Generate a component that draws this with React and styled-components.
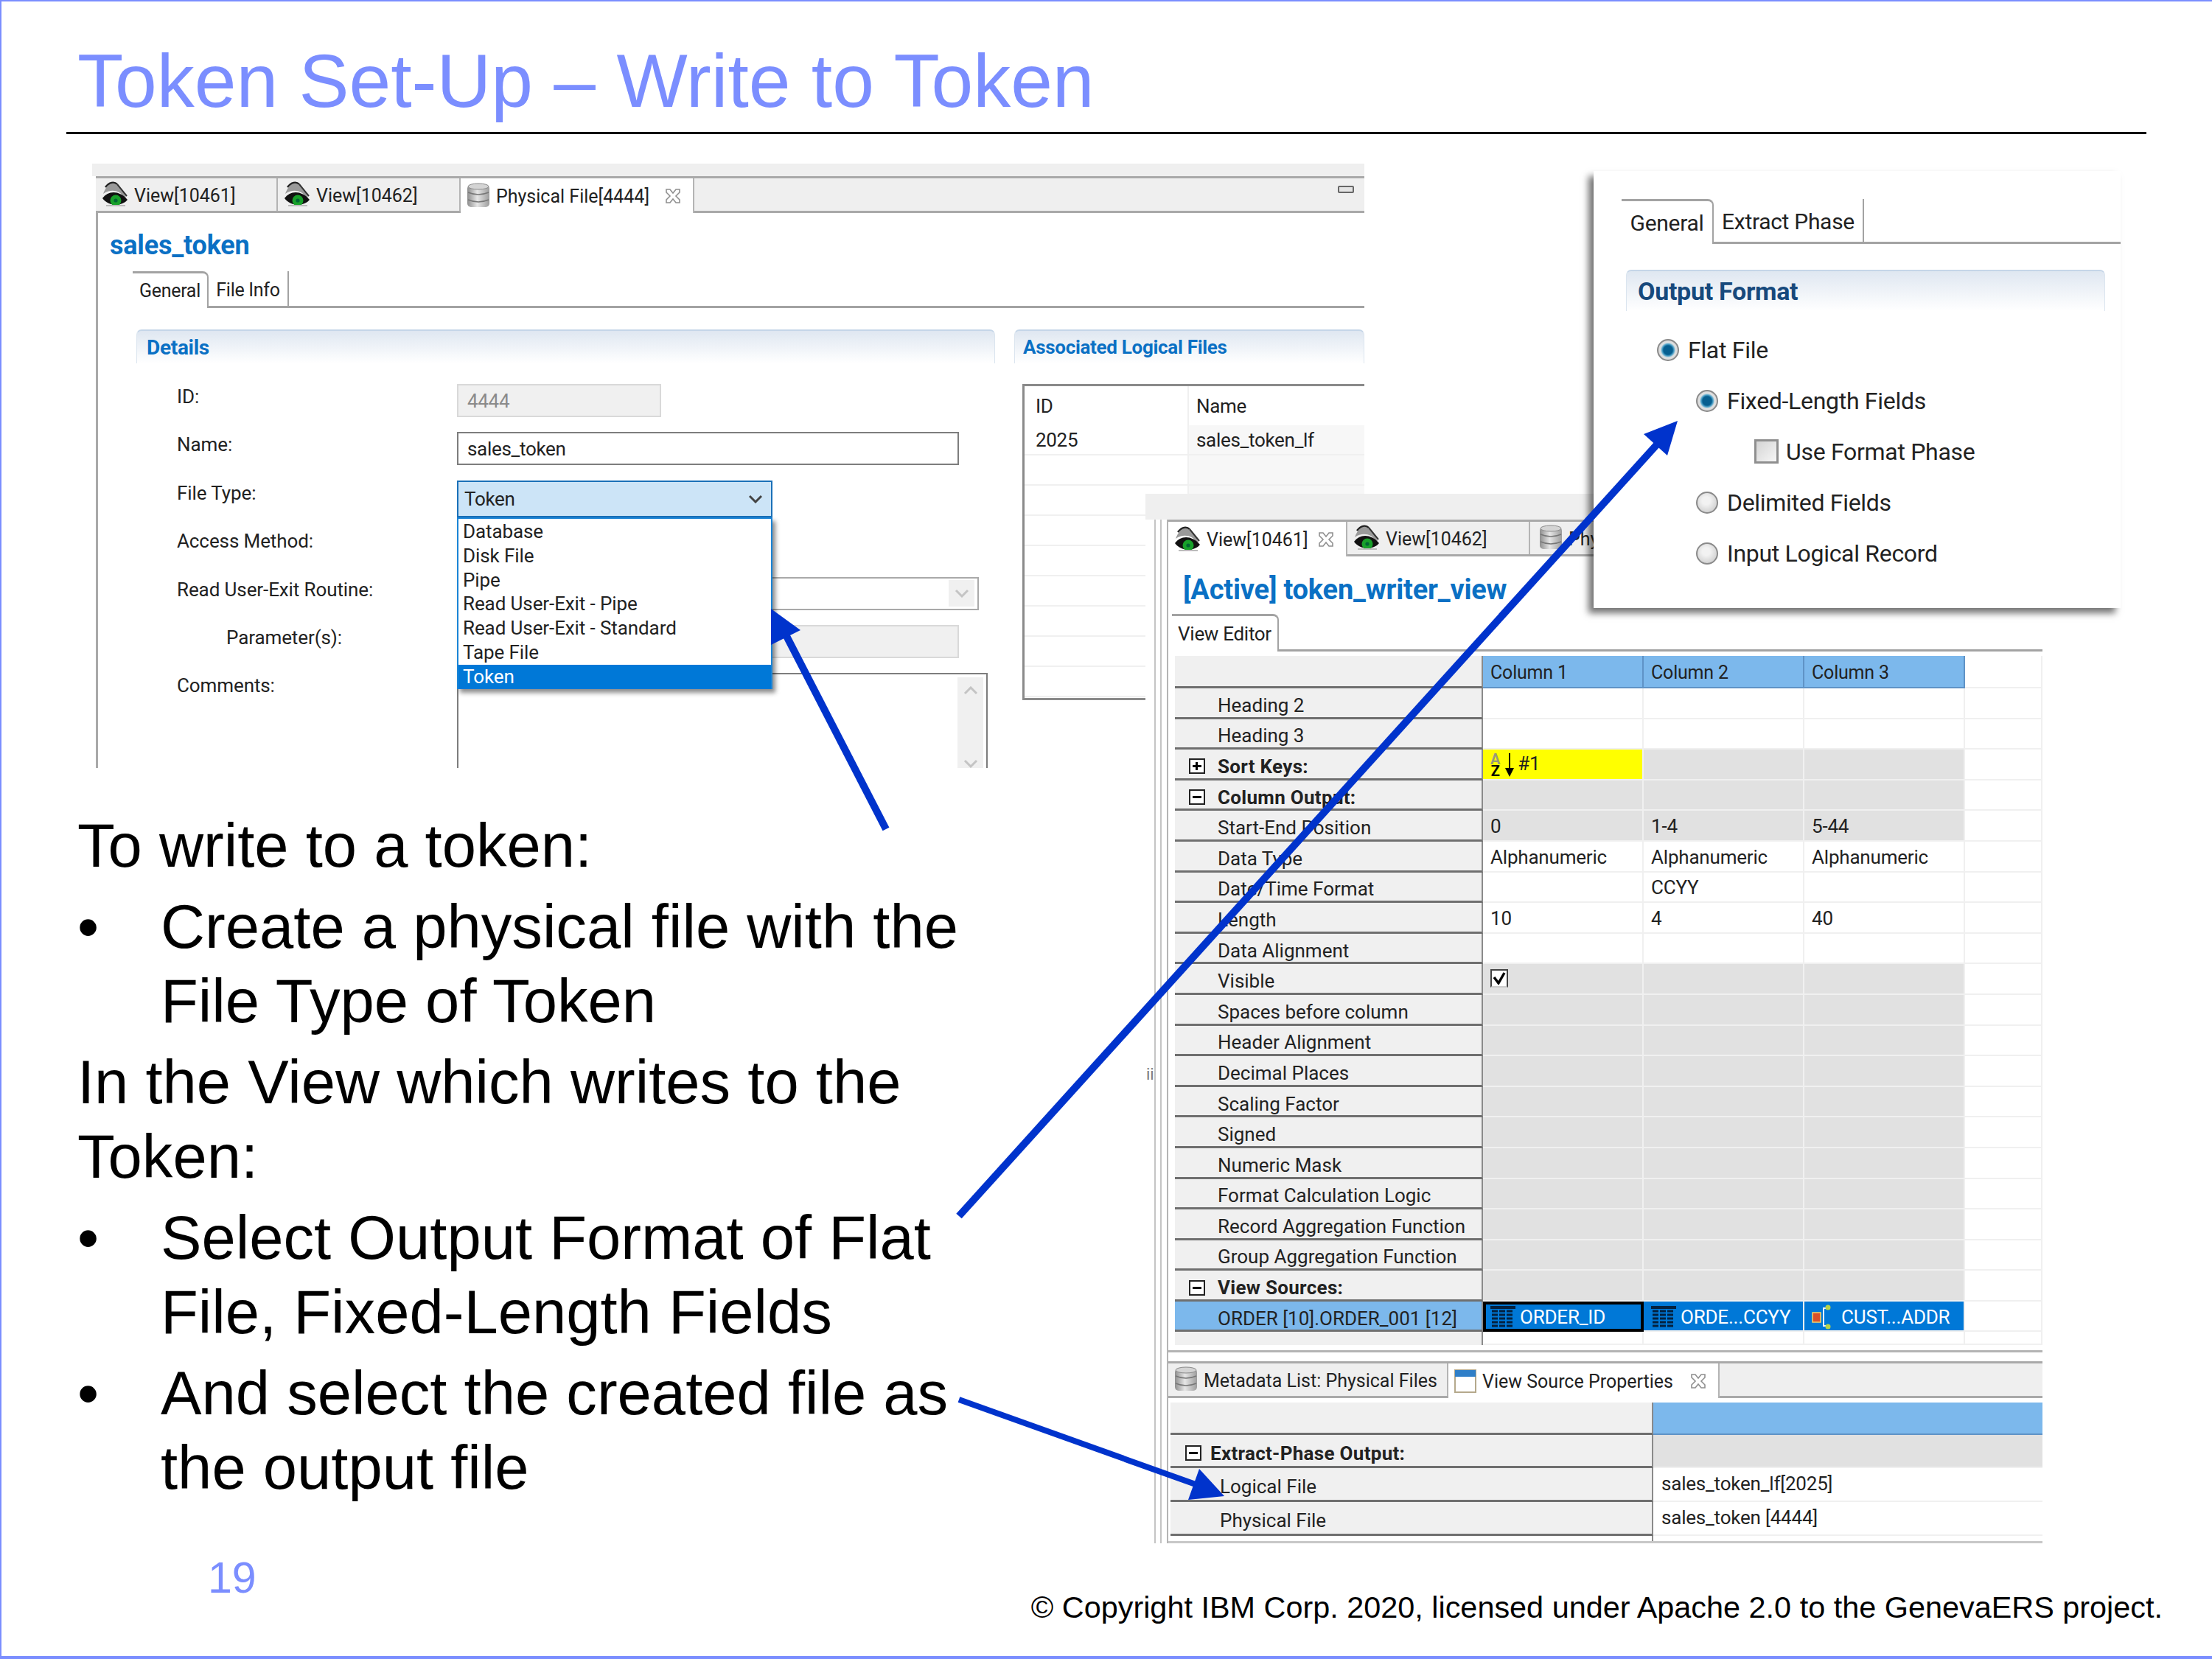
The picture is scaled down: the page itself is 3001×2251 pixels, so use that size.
import React from "react";
import styled, { createGlobalStyle } from "styled-components";

const GlobalStyle = createGlobalStyle`
  html, body { margin: 0; padding: 0; background: #fff; }
  * { box-sizing: border-box; }
`;

const SLIDE = "#7b8eff";
const ARROW = "#0033cc";
const UI = `Roboto, "Open Sans", sans-serif`;
const LINK = "#0a70c4";

const Slide = styled.div`
  position: relative;
  width: 3001px;
  height: 2251px;
  overflow: hidden;
  display: flex;
  flex-direction: column;
  background: #fff;
  border-top: 2px solid ${SLIDE};
  border-left: 2px solid ${SLIDE};
  border-bottom: 4px solid ${SLIDE};
  font-family: "Liberation Sans", Arial, sans-serif;
`;

const Title = styled.h1`
  margin: 48px 0 0 103px;
  font-size: 102px;
  line-height: 120px;
  font-weight: 400;
  color: ${SLIDE};
  white-space: nowrap;
`;

const Rule = styled.div`
  height: 3px;
  margin: 9px 0 0 88px;
  width: 2822px;
  background: #000;
`;

const Body = styled.div`
  width: 1215px;
  margin: 915px 0 0 103px;
  color: #000;
  font-size: 83.2px;
  line-height: 101px;
`;

const Para = styled.div`
  margin-bottom: 9px;
`;

const Bullet = styled.div`
  display: grid;
  grid-template-columns: 113px 1fr;
  margin-bottom: 9px;
`;

const Footer = styled.div`
  margin-top: auto;
  display: flex;
  justify-content: space-between;
  padding: 0 67px 41px 280px;
`;

const PageNo = styled.div`
  font-size: 59px;
  line-height: 70px;
  color: ${SLIDE};
  margin-bottom: 30px;
`;

const Copyright = styled.div`
  font-size: 41.4px;
  line-height: 50px;
  color: #000;
  align-self: flex-end;
`;

/* screenshot windows float on the slide; coordinates are slide pixels */
const Shot = styled.div`
  position: absolute;
  left: ${(p) => p.$x - 2}px;
  top: ${(p) => p.$y - 2}px;
  width: ${(p) => p.$w}px;
  height: ${(p) => p.$h}px;
  background: #fff;
  font-family: ${UI};
  color: #222;
  display: flex;
  flex-direction: column;
`;

const FileShot = styled(Shot)`
  font-size: 26px;
  overflow: hidden;
`;

const ViewShot = styled(Shot)`
  font-size: 26px;
  overflow: hidden;
`;

const FormatShot = styled(Shot)`
  font-size: 30px;
  box-shadow: -7px 7px 9px rgba(0, 0, 0, 0.55);
  padding: 38px 0 0 38px;
`;

const GreyTop = styled.div`
  height: ${(p) => p.$h}px;
  flex: none;
  background: #efefef;
`;

const TabStrip = styled.div`
  height: 50px;
  flex: none;
  display: flex;
  align-items: stretch;
  background: #efefef;
  border-top: 3px solid #a9a9a9;
  border-bottom: 3px solid #a9a9a9;
  position: relative;
`;

const Tab = styled.div`
  width: ${(p) => p.$w}px;
  flex: none;
  display: flex;
  align-items: center;
  gap: 8px;
  padding: 2px 0 0 ${(p) => p.$pad ?? 8}px;
  white-space: nowrap;
  font-size: 25px;
  letter-spacing: 0;
  border-right: 2px solid #b4b4b4;
  background: ${(p) => (p.$active ? "#fff" : "transparent")};
  margin-bottom: ${(p) => (p.$active ? "-3px" : "0")};
  svg {
    flex: none;
    margin-top: -2px;
  }
`;

const CloseMark = styled.span`
  margin-left: auto;
  margin-right: 15px;
  display: flex;
`;

const Minimize = styled.div`
  position: absolute;
  right: 14px;
  top: 10px;
  width: 22px;
  height: 10px;
  background: #e4e4e4;
  border: 2px solid #666;
  border-radius: 2px;
`;

const FileBody = styled.div`
  margin-left: 5px;
  flex: 1;
  display: flex;
  flex-direction: column;
  border-left: 3px solid #a9a9a9;
  position: relative;
`;

const EditorName = styled.div`
  height: ${(p) => p.$h}px;
  flex: none;
  padding: ${(p) => p.$top}px 0 0 ${(p) => p.$left}px;
  font-size: ${(p) => p.$size}px;
  line-height: 46px;
  font-weight: 700;
  color: ${LINK};
  white-space: nowrap;
  letter-spacing: -0.2px;
`;

const SubTabs = styled.div`
  height: ${(p) => p.$h ?? 50}px;
  flex: none;
  display: flex;
  margin-left: ${(p) => p.$left ?? 0}px;
  border-bottom: 3px solid #a3a3a3;
  letter-spacing: -0.3px;
  font-size: ${(p) => p.$size ?? 25}px;
`;

const SubTab = styled.div`
  width: ${(p) => p.$w}px;
  display: flex;
  align-items: center;
  justify-content: center;
  white-space: nowrap;
  margin-bottom: ${(p) => (p.$active ? "-3px" : "0")};
  padding-top: ${(p) => (p.$active ? "0" : "3px")};
  background: #fff;
  border-right: 2px solid #a3a3a3;
  border-top: ${(p) => (p.$active ? "3px solid #a3a3a3" : "0")};
  border-top-right-radius: ${(p) => (p.$active ? "8px" : "0")};
`;

const Sections = styled.div`
  flex: 1;
  display: flex;
  gap: 26px;
  padding: 29px 0 0 52px;
  min-height: 0;
`;

const Section = styled.div`
  display: flex;
  flex-direction: column;
  flex: ${(p) => (p.$w ? "none" : 1)};
  width: ${(p) => (p.$w ? `${p.$w}px` : "auto")};
  min-width: 0;
  margin: ${(p) => p.$margin ?? "0"};
`;

const SectionHead = styled.div`
  height: ${(p) => p.$h ?? 46}px;
  flex: none;
  display: flex;
  align-items: center;
  padding-left: ${(p) => p.$pad ?? 13}px;
  font-weight: 700;
  font-size: ${(p) => p.$size ?? 26}px;
  letter-spacing: -0.3px;
  color: ${(p) => p.$color ?? LINK};
  background: linear-gradient(#dfe7f1, #ffffff);
  border-top: 2px solid #c5d6e8;
  border-left: 1px solid #dbe5ef;
  border-right: 1px solid #dbe5ef;
  border-radius: 7px 7px 0 0;
`;

const Form = styled.div`
  flex: 1;
  display: flex;
  flex-direction: column;
  padding: 28px 0 0 55px;
  min-height: 0;
`;

const FormRow = styled.div`
  height: 65.4px;
  flex: none;
  display: flex;
  align-items: flex-start;
`;

const FieldLabel = styled.div`
  width: 380px;
  flex: none;
  padding-left: ${(p) => p.$indent ?? 0}px;
  line-height: 34px;
  height: 34px;
  letter-spacing: -0.1px;
  white-space: nowrap;
`;

const Input = styled.div`
  width: ${(p) => p.$w}px;
  height: ${(p) => p.$h ?? 45}px;
  display: flex;
  align-items: center;
  padding-left: 12px;
  color: ${(p) => (p.$disabled ? "#8a8a8a" : "#222")};
  background: ${(p) => (p.$disabled ? "#f0f0f0" : "#fff")};
  border: 2px solid ${(p) => (p.$disabled ? "#d9d9d9" : "#7d7d7d")};
  letter-spacing: -0.3px;
`;

const Combo = styled(Input)`
  justify-content: space-between;
  padding: 0 4px 0 8px;
  background: ${(p) => (p.$open ? "#cce4f7" : "#fff")};
  border-color: ${(p) => (p.$open ? "#1a70b8" : "#a9a9a9")};
`;

const ChevronBox = styled.div`
  width: 35px;
  height: 36px;
  display: flex;
  align-items: center;
  justify-content: center;
  background: ${(p) => (p.$grey ? "#f0f0f0" : "transparent")};
`;

const DropDown = styled.div`
  position: absolute;
  left: 487px;
  top: 413px;
  width: 428px;
  height: 233px;
  padding-top: 1px;
  background: #fff;
  border: 2px solid #1a84d6;
  border-bottom: 0;
  box-shadow: 4px 5px 6px rgba(0, 0, 0, 0.45);
  display: flex;
  flex-direction: column;
  z-index: 2;
`;

const DropItem = styled.div`
  height: 32.8px;
  flex: none;
  line-height: 32px;
  padding-left: 6px;
  white-space: nowrap;
  letter-spacing: -0.1px;
  color: ${(p) => (p.$on ? "#fff" : "#222")};
  background: ${(p) => (p.$on ? "#0078d7" : "transparent")};
`;

const CommentBox = styled.div`
  width: 720px;
  height: 160px;
  display: flex;
  justify-content: flex-end;
  padding: 4px 4px 0 0;
  border: 2px solid #7d7d7d;
  border-bottom: 0;
`;

const ScrollBar = styled.div`
  width: 35px;
  height: 125px;
  background: #f0f0f0;
  display: flex;
  flex-direction: column;
  align-items: center;
  justify-content: space-between;
  padding: 12px 0 2px;
`;

const LogicalTable = styled.div`
  margin: 28px 0 0 11px;
  height: 429px;
  border: 3px solid #8a8a8a;
  border-right: 0;
  overflow: hidden;
`;

const LogicalRow = styled.div`
  height: ${(p) => p.$h ?? 41}px;
  display: grid;
  grid-template-columns: 221px 1fr;
  border-bottom: ${(p) => (p.$head ? "0" : "2px solid #f0f0f0")};
`;

const LogicalCell = styled.div`
  display: flex;
  align-items: center;
  padding-left: ${(p) => p.$pad}px;
  background: ${(p) => (p.$shade ? "#f7f7f7" : "#fff")};
  border-left: ${(p) => (p.$shade || p.$line ? "2px solid #f0f0f0" : "0")};
  letter-spacing: -0.3px;
`;

const ViewMain = styled.div`
  flex: 1;
  display: flex;
  min-height: 0;
`;

const Gutter = styled.div`
  width: 31px;
  flex: none;
  display: flex;
  align-items: center;
  padding: 115px 0 0 1px;
  color: #7a7a7a;
  font-size: 22px;
  border-right: 2px solid #b4b4b4;
  position: relative;
  &::after {
    content: "";
    position: absolute;
    left: 12px;
    top: 0;
    bottom: 0;
    width: 6px;
    border-left: 2px solid #c4c4c4;
    border-right: 2px solid #c4c4c4;
  }
`;

const ViewColumn = styled.div`
  flex: 1;
  display: flex;
  flex-direction: column;
  min-width: 0;
`;

const Grid = styled.div`
  margin: 6px 0 0 9px;
  flex: none;
  display: flex;
  flex-direction: column;
`;

const GridRow = styled.div`
  display: grid;
  grid-template-columns: 418px 218px 218px 218px 1fr;
  height: ${(p) => p.$h ?? 41.6}px;
`;

const RowLabel = styled.div`
  display: flex;
  align-items: center;
  gap: 17px;
  padding-left: ${(p) => (p.$tree ? 19 : 58)}px;
  padding-top: 7px;
  background: ${(p) => (p.$sel ? "#7cb8ec" : "#f0f0f0")};
  border-bottom: ${(p) => (p.$plain ? "0" : "3px solid #6f6f6f")};
  border-right: 2px solid #8a8a8a;
  font-weight: ${(p) => (p.$bold ? 700 : 400)};
  letter-spacing: ${(p) => (p.$bold ? "0.3px" : "0")};
  white-space: nowrap;
`;

const fills = { w: "#fff", g: "#e1e1e1", y: "#ffff00", b: "#0078d7", h: "#7cb8ec" };

const RowCell = styled.div`
  display: flex;
  align-items: center;
  gap: 6px;
  padding: 2px 0 0 10px;
  background: ${(p) => fills[p.$fill]};
  border-right: 2px solid ${(p) => (p.$fill === "h" ? "#5f93c6" : "#f0f0f0")};
  border-bottom: 2px solid ${(p) => (p.$fill === "h" ? "#5f93c6" : "#f0f0f0")};
  color: ${(p) => (p.$fill === "b" ? "#fff" : "#222")};
  font-size: ${(p) => (p.$fill === "h" ? 25 : 26)}px;
  letter-spacing: -0.2px;
  white-space: nowrap;
  outline: ${(p) => (p.$focus ? "4px solid #000" : "0")};
  outline-offset: -4px;
`;

const SortGlyph = styled.span`
  display: flex;
  flex-direction: column;
  font-size: 20px;
  line-height: 16px;
  font-weight: 700;
  color: #000;
  align-items: center;
`;

const SortA = styled.span`
  color: #9a9a7a;
`;

const SortLabel = styled.span`
  margin-top: -4px;
  margin-left: -2px;
`;

const TreeBox = styled.span`
  width: 22px;
  height: 21px;
  flex: none;
  border: 2px solid #222;
  background: #fff;
  position: relative;
  &::before {
    content: "";
    position: absolute;
    left: 3px;
    right: 3px;
    top: 7px;
    height: 3px;
    background: #000;
  }
  &::after {
    content: "";
    display: ${(p) => (p.$plus ? "block" : "none")};
    position: absolute;
    top: 3px;
    bottom: 3px;
    left: 7px;
    width: 3px;
    background: #000;
  }
`;

const CheckBox = styled.span`
  width: 24px;
  height: 25px;
  display: flex;
  align-items: center;
  justify-content: center;
  margin-top: -4px;
  background: #fff;
  border: 2px solid #444;
  border-bottom-color: #ccc;
`;

const Divider = styled.div`
  height: 10px;
  border-bottom: 3px solid #b4b4b4;
  flex: none;
`;

const LowerTabs = styled(TabStrip)`
  margin-top: 12px;
`;

const PropGrid = styled.div`
  margin: 6px 0 0 3px;
  display: flex;
  flex-direction: column;
  flex: none;
`;

const PropRow = styled.div`
  display: grid;
  grid-template-columns: 655px 1fr;
  height: ${(p) => p.$h}px;
`;

const PropLabel = styled(RowLabel)`
  gap: 12px;
  padding-left: ${(p) => (p.$tree ? 20 : 67)}px;
`;

const PropCell = styled.div`
  display: flex;
  align-items: center;
  padding: 0 0 3px 11px;
  background: ${(p) => fills[p.$fill]};
  border-bottom: 2px solid ${(p) => (p.$fill === "h" ? "#5f93c6" : "#f0f0f0")};
  letter-spacing: -0.2px;
`;

const LowerEdge = styled.div`
  height: 10px;
  flex: none;
  display: grid;
  grid-template-columns: 658px 1fr;
  border-bottom: 3px solid #c8c8c8;
`;

const LowerEdgeCell = styled.div`
  border-right: 2px solid #8a8a8a;
`;

const OptionList = styled.div`
  display: flex;
  flex-direction: column;
  padding-top: 19px;
`;

const Option = styled.div`
  height: 68.8px;
  display: flex;
  align-items: center;
  gap: ${(p) => p.$gap ?? 12}px;
  padding-left: ${(p) => p.$indent}px;
  font-size: 32px;
  letter-spacing: -0.3px;
  white-space: nowrap;
`;

const Radio = styled.span`
  width: 30px;
  height: 30px;
  flex: none;
  border-radius: 50%;
  border: 2px solid #8a8a8a;
  background: ${(p) =>
    p.$on
      ? "radial-gradient(circle, #075f90 0 33%, #4fa3c9 44%, #e2e2e2 56%, #c4c4c4 100%)"
      : "radial-gradient(circle at 45% 40%, #f2f2f2 0 25%, #c2c2c2 100%)"};
`;

const SquareBox = styled.span`
  width: 33px;
  height: 33px;
  flex: none;
  border: 3px solid #8f8f8f;
  background: linear-gradient(135deg, #d4d4d4, #f6f6f6);
`;

const ArrowLayer = styled.svg`
  position: absolute;
  left: -2px;
  top: -2px;
  z-index: 10;
  pointer-events: none;
`;

const Eye = () => (
  <svg width="36" height="36" viewBox="0 0 36 36">
    <path d="M2 17 C6 6 12 1 18 2 L29 14 L33 22 L30 22 C25 12 12 10 2 17Z" fill="#9a9a9a" />
    <path d="M5 8 C10 1 17 0 21 4" stroke="#222" strokeWidth="2.4" fill="none" />
    <path d="M21 4 L34 20" stroke="#333" strokeWidth="2" fill="none" />
    <path d="M1 23 C9 12 24 12 35 25 C28 34 10 35 1 23Z" fill="#111" />
    <ellipse cx="19" cy="26" rx="7.5" ry="7.5" fill="#18a02a" />
    <circle cx="19" cy="26" r="2.6" fill="#063" />
    <path d="M6 33 H32" stroke="#bbb" strokeWidth="2" />
  </svg>
);

const Db = () => (
  <svg width="32" height="36" viewBox="0 0 32 36">
    <defs>
      <linearGradient id="dbg" x1="0" x2="1" y1="0" y2="0">
        <stop offset="0" stopColor="#8d8d8d" />
        <stop offset="0.45" stopColor="#e6e6e6" />
        <stop offset="1" stopColor="#9c9c9c" />
      </linearGradient>
    </defs>
    <rect x="1" y="3" width="30" height="30" rx="5" fill="url(#dbg)" />
    <ellipse cx="16" cy="5" rx="14" ry="4" fill="#d4d4d4" stroke="#8a8a8a" />
    <path d="M2 13 Q16 19 30 13 M2 23 Q16 29 30 23" stroke="#777" strokeWidth="1.6" fill="none" />
  </svg>
);

const CloseX = () => (
  <svg width="24" height="24" viewBox="0 0 24 24">
    <path
      d="M3 3 H8 L12 8 L16 3 H21 V7 L16 12 L21 17 V21 H16 L12 16 L8 21 H3 V17 L8 12 L3 7Z"
      fill="#fff"
      stroke="#8f8f8f"
      strokeWidth="1.6"
    />
  </svg>
);

const Chevron = ({ up, color = "#444", w = 20 }) => (
  <svg width={w} height={w * 0.6} viewBox="0 0 20 12">
    <path d={up ? "M2 10 L10 2 L18 10" : "M2 2 L10 10 L18 2"} fill="none" stroke={color} strokeWidth="3" />
  </svg>
);

const SortArrow = () => (
  <svg width="14" height="32" viewBox="0 0 14 32">
    <path d="M7 0 V24" stroke="#000" strokeWidth="2" />
    <path d="M1 20 H13 L7 32Z" fill="#000" />
  </svg>
);

const Tick = () => (
  <svg width="18" height="18" viewBox="0 0 18 18">
    <path d="M2 8 L8 16 L16 2" fill="none" stroke="#000" strokeWidth="3.4" />
  </svg>
);

const TableGlyph = () => (
  <svg width="34" height="30" viewBox="0 0 34 30" style={{ flex: "none" }}>
    <rect x="0" y="0" width="34" height="4" fill="#04213f" />
    {[7, 12, 17, 22, 27].map((y) => (
      <path key={y} d="M2 0 H32" transform={`translate(0 ${y})`} stroke="#04213f" strokeWidth="3" strokeDasharray="8 2" />
    ))}
  </svg>
);

const JoinGlyph = () => (
  <svg width="34" height="36" viewBox="0 0 34 36" style={{ flex: "none" }}>
    <rect x="1" y="12" width="11" height="13" fill="#d8502a" stroke="#f5d26a" strokeWidth="1.5" />
    <path d="M20 6 H16 V30 H20" fill="none" stroke="#e9f2ff" strokeWidth="2" />
    <circle cx="22" cy="5" r="3.5" fill="#b6d44a" />
    <circle cx="22" cy="31" r="3.5" fill="#b6d44a" />
  </svg>
);

const WindowGlyph = () => (
  <svg width="30" height="32" viewBox="0 0 30 32">
    <rect x="1" y="1" width="28" height="30" fill="#fff" stroke="#b5a98c" strokeWidth="2" />
    <rect x="1" y="1" width="28" height="9" fill="#2f7fc8" />
  </svg>
);

const items = ["Database", "Disk File", "Pipe", "Read User-Exit - Pipe", "Read User-Exit - Standard", "Tape File"];

const rows = [
  { label: "Heading 2", fill: "w" },
  { label: "Heading 3", fill: "w" },
  { label: "Sort Keys:", tree: "plus", bold: true, fill: "g", sort: true },
  { label: "Column Output:", tree: "minus", bold: true, fill: "g" },
  { label: "Start-End Position", fill: "g", cells: ["0", "1-4", "5-44"] },
  { label: "Data Type", fill: "w", cells: ["Alphanumeric", "Alphanumeric", "Alphanumeric"] },
  { label: "Date/Time Format", fill: "w", cells: ["", "CCYY", ""] },
  { label: "Length", fill: "w", cells: ["10", "4", "40"] },
  { label: "Data Alignment", fill: "w" },
  { label: "Visible", fill: "g", check: true },
  { label: "Spaces before column", fill: "g" },
  { label: "Header Alignment", fill: "g" },
  { label: "Decimal Places", fill: "g" },
  { label: "Scaling Factor", fill: "g" },
  { label: "Signed", fill: "g" },
  { label: "Numeric Mask", fill: "g" },
  { label: "Format Calculation Logic", fill: "g" },
  { label: "Record Aggregation Function", fill: "g" },
  { label: "Group Aggregation Function", fill: "g" },
  { label: "View Sources:", tree: "minus", bold: true, fill: "g" },
];

const PhysicalFileWindow = () => (
  <FileShot $x={125} $y={222} $w={1726} $h={820}>
    <GreyTop $h={17} />
    <TabStrip style={{ marginLeft: 5 }}>
      <Tab $w={247}><Eye /> View[10461]</Tab>
      <Tab $w={248}><Eye /> View[10462]</Tab>
      <Tab $w={317} $active>
        <Db /> Physical File[4444]
        <CloseMark><CloseX /></CloseMark>
      </Tab>
      <Minimize />
    </TabStrip>
    <FileBody>
      <EditorName $h={79} $top={21} $left={16} $size={36}>sales_token</EditorName>
      <SubTabs $left={47}>
        <SubTab $w={103} $active>General</SubTab>
        <SubTab $w={109}>File Info</SubTab>
      </SubTabs>
      <Sections>
        <Section $w={1165}>
          <SectionHead $size={28}>Details</SectionHead>
          <Form>
            <FormRow>
              <FieldLabel>ID:</FieldLabel>
              <Input $w={277} $disabled>4444</Input>
            </FormRow>
            <FormRow>
              <FieldLabel>Name:</FieldLabel>
              <Input $w={681}>sales_token</Input>
            </FormRow>
            <FormRow>
              <FieldLabel>File Type:</FieldLabel>
              <Combo $w={428} $h={50} $open>
                Token
                <ChevronBox><Chevron /></ChevronBox>
              </Combo>
            </FormRow>
            <FormRow>
              <FieldLabel>Access Method:</FieldLabel>
            </FormRow>
            <FormRow>
              <FieldLabel>Read User-Exit Routine:</FieldLabel>
              <Combo $w={708}>
                <span />
                <ChevronBox $grey><Chevron color="#c4c4c4" /></ChevronBox>
              </Combo>
            </FormRow>
            <FormRow>
              <FieldLabel $indent={67}>Parameter(s):</FieldLabel>
              <Input $w={681} $disabled />
            </FormRow>
            <FormRow>
              <FieldLabel>Comments:</FieldLabel>
              <CommentBox>
                <ScrollBar>
                  <Chevron up color="#c4c4c4" />
                  <Chevron color="#c4c4c4" />
                </ScrollBar>
              </CommentBox>
            </FormRow>
          </Form>
        </Section>
        <Section>
          <SectionHead $pad={11}>Associated Logical Files</SectionHead>
          <LogicalTable>
            <LogicalRow $h={53} $head>
              <LogicalCell $pad={15}>ID</LogicalCell>
              <LogicalCell $pad={10} $line>Name</LogicalCell>
            </LogicalRow>
            <LogicalRow>
              <LogicalCell $pad={15}>2025</LogicalCell>
              <LogicalCell $pad={10} $shade>sales_token_lf</LogicalCell>
            </LogicalRow>
            {[1, 2, 3, 4, 5, 6, 7, 8].map((n) => (
              <LogicalRow key={n}>
                <LogicalCell $pad={15} />
                <LogicalCell $pad={10} $shade />
              </LogicalRow>
            ))}
          </LogicalTable>
        </Section>
      </Sections>
      <DropDown>
        {items.map((item) => (
          <DropItem key={item}>{item}</DropItem>
        ))}
        <DropItem $on>Token</DropItem>
      </DropDown>
    </FileBody>
  </FileShot>
);

const ViewWindow = () => (
  <ViewShot $x={1554} $y={670} $w={1217} $h={1424}>
    <GreyTop $h={35} />
    <ViewMain>
      <Gutter>ii</Gutter>
      <ViewColumn>
        <TabStrip>
          <Tab $w={243} $active>
            <Eye /> View[10461]
            <CloseMark><CloseX /></CloseMark>
          </Tab>
          <Tab $w={248}><Eye /> View[10462]</Tab>
          <Tab $w={200} $pad={12}><Db /> Physical File[4444]</Tab>
        </TabStrip>
        <EditorName $h={78} $top={22} $left={20} $size={38}>[Active] token_writer_view</EditorName>
        <SubTabs $h={51} $left={5} $size={26}>
          <SubTab $w={145} $active>View Editor</SubTab>
        </SubTabs>
        <Grid>
          <GridRow $h={44}>
            <RowLabel />
            <RowCell $fill="h">Column 1</RowCell>
            <RowCell $fill="h">Column 2</RowCell>
            <RowCell $fill="h">Column 3</RowCell>
            <RowCell $fill="w" />
          </GridRow>
          {rows.map((row) => (
            <GridRow key={row.label}>
              <RowLabel $bold={row.bold} $tree={row.tree}>
                {row.tree && <TreeBox $plus={row.tree === "plus"} />}
                {row.label}
              </RowLabel>
              <RowCell $fill={row.sort ? "y" : row.fill}>
                {row.sort && (
                  <>
                    <SortGlyph>
                      <SortA>A</SortA>
                      <span>Z</span>
                    </SortGlyph>
                    <SortArrow />
                    <SortLabel>#1</SortLabel>
                  </>
                )}
                {row.check && <CheckBox><Tick /></CheckBox>}
                {row.cells && row.cells[0]}
              </RowCell>
              <RowCell $fill={row.fill}>{row.cells && row.cells[1]}</RowCell>
              <RowCell $fill={row.fill}>{row.cells && row.cells[2]}</RowCell>
              <RowCell $fill="w" />
            </GridRow>
          ))}
          <GridRow>
            <RowLabel $sel>ORDER [10].ORDER_001 [12]</RowLabel>
            <RowCell $fill="b" $focus><TableGlyph /> ORDER_ID</RowCell>
            <RowCell $fill="b"><TableGlyph /> ORDE...CCYY</RowCell>
            <RowCell $fill="b"><JoinGlyph /> CUST...ADDR</RowCell>
            <RowCell $fill="w" />
          </GridRow>
          <GridRow $h={18}>
            <RowLabel $plain />
            <RowCell $fill="w" />
            <RowCell $fill="w" />
            <RowCell $fill="w" />
            <RowCell $fill="w" />
          </GridRow>
        </Grid>
        <Divider />
        <LowerTabs>
          <Tab $w={380}><Db /> Metadata List: Physical Files</Tab>
          <Tab $w={368} $active>
            <WindowGlyph /> View Source Properties
            <CloseMark><CloseX /></CloseMark>
          </Tab>
        </LowerTabs>
        <PropGrid>
          <PropRow $h={44}>
            <PropLabel />
            <PropCell $fill="h" />
          </PropRow>
          <PropRow $h={45}>
            <PropLabel $tree $bold><TreeBox /> Extract-Phase Output:</PropLabel>
            <PropCell $fill="g" />
          </PropRow>
          <PropRow $h={46}>
            <PropLabel>Logical File</PropLabel>
            <PropCell $fill="w">sales_token_lf[2025]</PropCell>
          </PropRow>
          <PropRow $h={46}>
            <PropLabel>Physical File</PropLabel>
            <PropCell $fill="w">sales_token [4444]</PropCell>
          </PropRow>
        </PropGrid>
        <LowerEdge>
          <LowerEdgeCell />
        </LowerEdge>
      </ViewColumn>
    </ViewMain>
  </ViewShot>
);

const OutputFormatWindow = () => (
  <FormatShot $x={2162} $y={232} $w={715} $h={593}>
    <SubTabs $h={61} $size={30}>
      <SubTab $w={125} $active>General</SubTab>
      <SubTab $w={204}>Extract Phase</SubTab>
    </SubTabs>
    <Section $margin="35px 21px 0 6px">
      <SectionHead $h={56} $pad={15} $size={34} $color="#17497c">Output Format</SectionHead>
      <OptionList>
        <Option $indent={42}><Radio $on /> Flat File</Option>
        <Option $indent={95}><Radio $on /> Fixed-Length Fields</Option>
        <Option $indent={174} $gap={10}><SquareBox /> Use Format Phase</Option>
        <Option $indent={95}><Radio /> Delimited Fields</Option>
        <Option $indent={95}><Radio /> Input Logical Record</Option>
      </OptionList>
    </Section>
  </FormatShot>
);

const Arrows = () => (
  <ArrowLayer width="3001" height="2251" viewBox="0 0 3001 2251">
    <path d="M1202 1125 L1067 863" stroke={ARROW} strokeWidth="10" fill="none" />
    <polygon points="1046,826 1086,855 1046,875" fill={ARROW} />
    <path d="M1301 1650 L2248 603" stroke={ARROW} strokeWidth="10" fill="none" />
    <polygon points="2276,571 2230,589 2262,618" fill={ARROW} />
    <path d="M1301 1899 L1622 2014" stroke={ARROW} strokeWidth="8" fill="none" />
    <polygon points="1661,2030 1627,1993 1612,2035" fill={ARROW} />
  </ArrowLayer>
);

export default function App() {
  return (
    <>
      <GlobalStyle />
      <Slide>
        <Title>Token Set-Up – Write to Token</Title>
        <Rule />
        <Body>
          <Para>To write to a token:</Para>
          <Bullet><span>•</span><span>Create a physical file with the File Type of Token</span></Bullet>
          <Para>In the View which writes to the Token:</Para>
          <Bullet><span>•</span><span>Select Output Format of Flat File, Fixed-Length Fields</span></Bullet>
          <Bullet><span>•</span><span>And select the created file as the output file</span></Bullet>
        </Body>
        <Footer>
          <PageNo>19</PageNo>
          <Copyright>© Copyright IBM Corp. 2020, licensed under Apache 2.0 to the GenevaERS project.</Copyright>
        </Footer>
        <PhysicalFileWindow />
        <ViewWindow />
        <OutputFormatWindow />
        <Arrows />
      </Slide>
    </>
  );
}
